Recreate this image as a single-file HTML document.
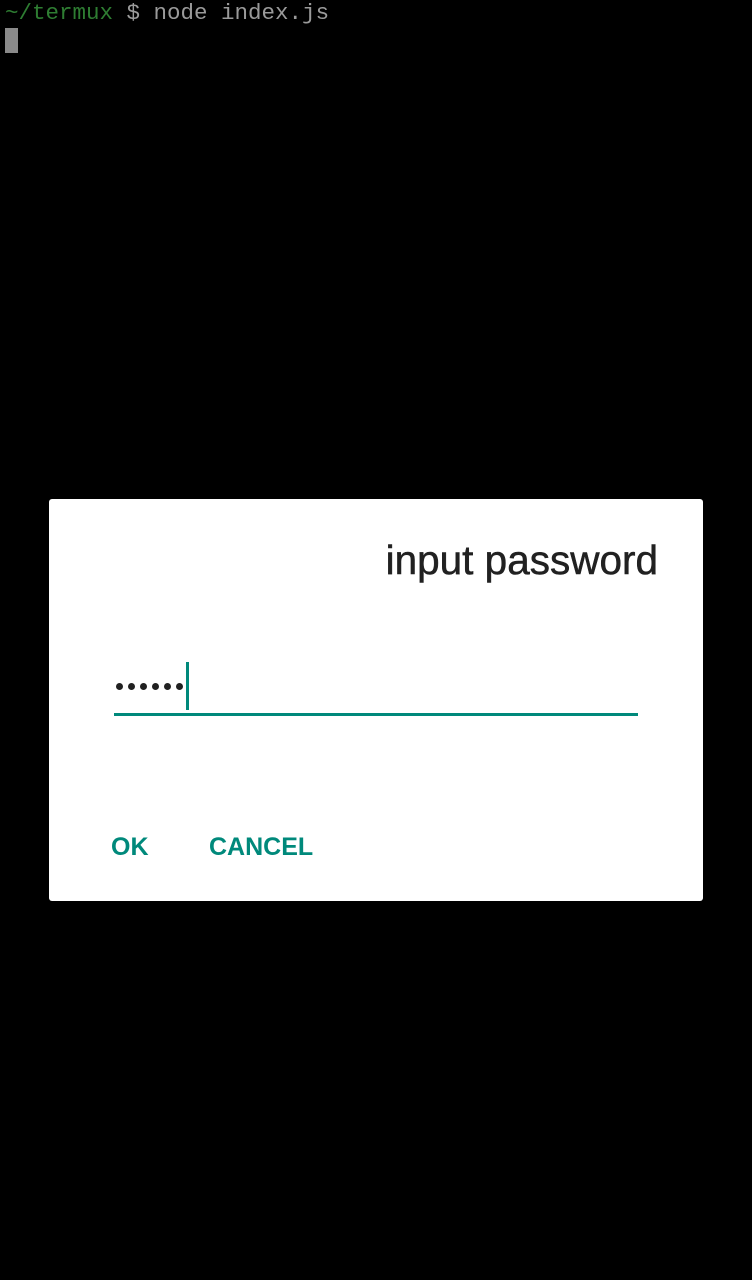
<!DOCTYPE html>
<html><head><meta charset="utf-8"><style>
html,body{margin:0;padding:0;background:#000;width:752px;height:1280px;overflow:hidden;position:relative}
.term{position:absolute;left:5px;top:0;font-family:"Liberation Mono",monospace;font-size:22.5px;line-height:26px;color:#9a9a9a;white-space:pre}
.g{color:#2e7d32}
.cur{position:absolute;left:5px;top:28px;width:13px;height:25px;background:#8a8a8a}
.dlg{position:absolute;left:49px;top:499px;width:654px;height:402px;background:#fff;border-radius:3px}
.title{position:absolute;right:94px;top:536px;font-family:"Liberation Sans",sans-serif;font-size:40.5px;color:#212121;line-height:48px;white-space:nowrap;-webkit-text-stroke:0.5px #212121}
.dot{position:absolute;top:683px;width:7px;height:7px;border-radius:50%;background:#212121}
.caret{position:absolute;left:186px;top:662px;width:3px;height:48px;background:#00897b}
.ul{position:absolute;left:114px;top:713px;width:524px;height:3px;background:#00897b}
.btn{position:absolute;top:831px;font-family:"Liberation Sans",sans-serif;font-weight:bold;font-size:25px;color:#00897b;line-height:32px}
</style></head><body>
<div class="term"><span class="g">~/termux</span> $ node index.js</div>
<div class="cur"></div>
<div class="dlg"></div>
<div class="title">input password</div>
<div class="dot" style="left:116px"></div>
<div class="dot" style="left:128px"></div>
<div class="dot" style="left:140px"></div>
<div class="dot" style="left:152px"></div>
<div class="dot" style="left:164px"></div>
<div class="dot" style="left:176px"></div>
<div class="caret"></div>
<div class="ul"></div>
<div class="btn" style="left:111px">OK</div>
<div class="btn" style="left:209px">CANCEL</div>
</body></html>
